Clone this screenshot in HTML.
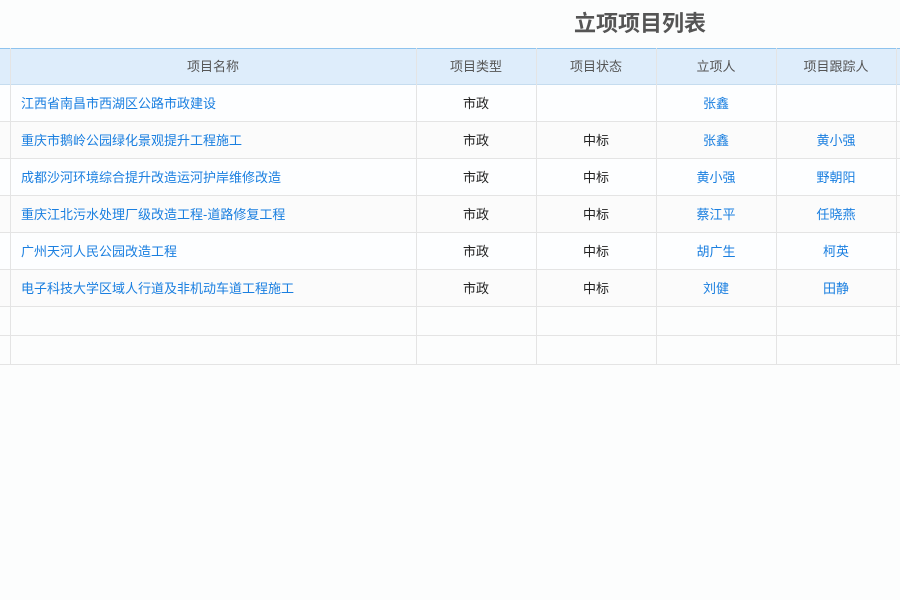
<!DOCTYPE html>
<html><head><meta charset="utf-8"><style>
body{margin:0;width:900px;height:600px;background:#fcfdfd;font-family:"Liberation Sans","Noto Sans CJK SC",sans-serif;position:relative;overflow:hidden}
.t{position:absolute;left:540px;top:9px;width:200px;text-align:center;font-size:22px;font-weight:bold;color:#555;line-height:30px}
.hd{position:absolute;left:0;top:48px;width:900px;height:37px;background:#deedfb;border-top:1px solid #8ec3ee;box-sizing:border-box;border-bottom:1px solid #c5dcef}
.r{position:absolute;left:0;width:900px;border-bottom:1px solid #e4e4e4;box-sizing:border-box}
.c{position:absolute;top:0;height:100%;display:flex;align-items:center;justify-content:center;font-size:13px;color:#222;box-sizing:border-box;padding-bottom:2px}
.hd .c{color:#555}
.b{color:#1a7fe0}
.vl{position:absolute;top:48px;height:317px;width:1px;background:#e4e4e4}
</style></head><body>
<div class="t">立项项目列表</div>
<div class="hd">
<div class="c" style="left:10px;width:406px">项目名称</div>
<div class="c" style="left:416px;width:120px">项目类型</div>
<div class="c" style="left:536px;width:120px">项目状态</div>
<div class="c" style="left:656px;width:120px">立项人</div>
<div class="c" style="left:776px;width:120px">项目跟踪人</div>
</div>
<div class="r" style="top:85px;height:37px;background:#fdfeff"><div class="c b" style="left:21px;justify-content:flex-start">江西省南昌市西湖区公路市政建设</div><div class="c" style="left:416px;width:120px">市政</div><div class="c b" style="left:656px;width:120px">张鑫</div></div>
<div class="r" style="top:122px;height:37px;background:#fbfbfb"><div class="c b" style="left:21px;justify-content:flex-start">重庆市鹅岭公园绿化景观提升工程施工</div><div class="c" style="left:416px;width:120px">市政</div><div class="c" style="left:536px;width:120px">中标</div><div class="c b" style="left:656px;width:120px">张鑫</div><div class="c b" style="left:776px;width:120px">黄小强</div></div>
<div class="r" style="top:159px;height:37px;background:#fdfeff"><div class="c b" style="left:21px;justify-content:flex-start">成都沙河环境综合提升改造运河护岸维修改造</div><div class="c" style="left:416px;width:120px">市政</div><div class="c" style="left:536px;width:120px">中标</div><div class="c b" style="left:656px;width:120px">黄小强</div><div class="c b" style="left:776px;width:120px">野朝阳</div></div>
<div class="r" style="top:196px;height:37px;background:#fbfbfb"><div class="c b" style="left:21px;justify-content:flex-start">重庆江北污水处理厂级改造工程-道路修复工程</div><div class="c" style="left:416px;width:120px">市政</div><div class="c" style="left:536px;width:120px">中标</div><div class="c b" style="left:656px;width:120px">蔡江平</div><div class="c b" style="left:776px;width:120px">任晓燕</div></div>
<div class="r" style="top:233px;height:37px;background:#fdfeff"><div class="c b" style="left:21px;justify-content:flex-start">广州天河人民公园改造工程</div><div class="c" style="left:416px;width:120px">市政</div><div class="c" style="left:536px;width:120px">中标</div><div class="c b" style="left:656px;width:120px">胡广生</div><div class="c b" style="left:776px;width:120px">柯英</div></div>
<div class="r" style="top:270px;height:37px;background:#fbfbfb"><div class="c b" style="left:21px;justify-content:flex-start">电子科技大学区域人行道及非机动车道工程施工</div><div class="c" style="left:416px;width:120px">市政</div><div class="c" style="left:536px;width:120px">中标</div><div class="c b" style="left:656px;width:120px">刘健</div><div class="c b" style="left:776px;width:120px">田静</div></div>
<div class="r" style="top:307px;height:29px"></div>
<div class="r" style="top:336px;height:29px"></div>
<div class="vl" style="left:10px"></div><div class="vl" style="left:416px"></div><div class="vl" style="left:536px"></div><div class="vl" style="left:656px"></div><div class="vl" style="left:776px"></div><div class="vl" style="left:896px"></div>
</body></html>
